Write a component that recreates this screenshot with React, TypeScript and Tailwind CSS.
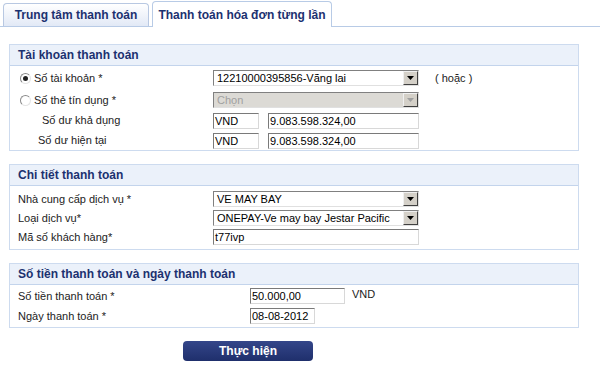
import React from 'react';

const font = { fontFamily: '"Liberation Sans", Arial, sans-serif' };

function Select({ value, disabled }: { value: string; disabled?: boolean }) {
  return (
    <div
      className={[
        'flex h-[16px] w-[206px] items-stretch border border-t-[#808080] border-l-[#808080] border-b-[#e0e0e0] border-r-[#e0e0e0]',
        disabled ? 'bg-[#dcdad5]' : 'bg-white',
      ].join(' ')}
    >
      <span
        className={[
          'flex-1 pl-[3px] text-[11px] leading-[14px]',
          disabled ? 'text-[#a0a0a0]' : 'text-black',
        ].join(' ')}
      >
        {value}
      </span>
      <span className="flex w-[15px] items-center justify-center border border-t-[#f0f0f0] border-l-[#f0f0f0] border-b-[#404040] border-r-[#404040] bg-[#d4d0c8]">
        <svg width="7" height="4" viewBox="0 0 7 4">
          <path d="M0 0h7L3.5 4z" fill={disabled ? '#a0a0a0' : '#000'} />
        </svg>
      </span>
    </div>
  );
}

function Input({ value, w }: { value: string; w: string }) {
  return (
    <div
      className={[
        'h-[16px] border border-t-[#7a7a7a] border-l-[#7a7a7a] border-b-[#d8d8d8] border-r-[#d8d8d8] bg-white pl-[1px] text-[11px] leading-[14px] text-black',
        w,
      ].join(' ')}
    >
      {value}
    </div>
  );
}

function Radio({ checked }: { checked?: boolean }) {
  return (
    <span className="mr-[3px] flex h-[11px] w-[11px] items-center justify-center rounded-full border border-[#8a8a8a] border-r-[#e4e4e4] border-b-[#e4e4e4] bg-white">
      {checked && <span className="h-[5px] w-[5px] rounded-full bg-[#222]" />}
    </span>
  );
}

function Panel({ title, children }: { title: string; children: React.ReactNode }) {
  return (
    <div className="ml-[9px] w-[570px] border border-[#cddbef]">
      <div className="flex h-[21px] items-center border-b border-[#c3d4ec] bg-[#ebf1fa] pl-[8px] text-[12px] font-bold text-[#1c3170]">
        {title}
      </div>
      {children}
    </div>
  );
}

export default function App() {
  return (
    <div className="h-[370px] w-[600px] overflow-hidden bg-white text-[11px] text-[#222]" style={font}>
      <div className="flex h-[27px] items-end border-b border-[#b8cbe6] pl-[3px]">
        <div className="flex h-[23px] w-[146px] items-center justify-center rounded-t-[4px] border border-b-0 border-[#b8c8e2] bg-gradient-to-b from-[#ffffff] to-[#e2e9f6] text-[12px] font-bold text-[#1c3170]">
          Trung tâm thanh toán
        </div>
        <div className="-mb-px ml-[3px] flex h-[26px] w-[180px] items-center justify-center rounded-t-[4px] border border-b-0 border-[#b8cbe6] bg-white text-[12px] font-bold text-[#1c3170]">
          Thanh toán hóa đơn từng lần
        </div>
      </div>

      <div className="mt-[17px]">
        <Panel title="Tài khoản thanh toán">
          <div className="flex flex-col pb-[2px]">
            <div className="mt-[4px] flex h-[16px] items-center">
              <div className="flex w-[203px] items-center pl-[10px]">
                <Radio checked />
                Số tài khoản *
              </div>
              <Select value="12210000395856-Vãng lai" />
              <span className="ml-[16px]">( hoặc )</span>
            </div>
            <div className="mt-[6px] flex h-[16px] items-center">
              <div className="flex w-[203px] items-center pl-[10px]">
                <Radio />
                Số thẻ tín dụng *
              </div>
              <Select value="Chọn" disabled />
            </div>
            <div className="mt-[5px] flex h-[15px] items-center">
              <div className="w-[203px] pl-[32px]">Số dư khả dụng</div>
              <Input value="VND" w="w-[46px]" />
              <div className="ml-[9px]">
                <Input value="9.083.598.324,00" w="w-[151px]" />
              </div>
            </div>
            <div className="mt-[5px] flex h-[15px] items-center">
              <div className="w-[203px] pl-[28px]">Số dư hiện tại</div>
              <Input value="VND" w="w-[46px]" />
              <div className="ml-[9px]">
                <Input value="9.083.598.324,00" w="w-[151px]" />
              </div>
            </div>
          </div>
        </Panel>
      </div>

      <div className="mt-[13px]">
        <Panel title="Chi tiết thanh toán">
          <div className="flex flex-col pb-[4px]">
            <div className="mt-[5px] flex h-[16px] items-center">
              <div className="w-[203px] pl-[8px]">Nhà cung cấp dịch vụ *</div>
              <Select value="VE MAY BAY" />
            </div>
            <div className="mt-[3px] flex h-[16px] items-center">
              <div className="w-[203px] pl-[8px]">Loại dịch vụ*</div>
              <Select value="ONEPAY-Ve may bay Jestar Pacific" />
            </div>
            <div className="mt-[3px] flex h-[16px] items-center">
              <div className="w-[203px] pl-[8px]">Mã số khách hàng*</div>
              <Input value="t77ivp" w="w-[206px]" />
            </div>
          </div>
        </Panel>
      </div>

      <div className="mt-[13px]">
        <Panel title="Số tiền thanh toán và ngày thanh toán">
          <div className="flex flex-col pb-[3px]">
            <div className="mt-[3px] flex h-[16px] items-center">
              <div className="w-[240px] pl-[8px]">Số tiền thanh toán *</div>
              <Input value="50.000,00" w="w-[95px]" />
              <span className="ml-[7px] -mt-[3px]">VND</span>
            </div>
            <div className="mt-[4px] flex h-[16px] items-center">
              <div className="w-[240px] pl-[8px]">Ngày thanh toán *</div>
              <Input value="08-08-2012" w="w-[65px]" />
            </div>
          </div>
        </Panel>
      </div>

      <div className="mt-[13px] pl-[183px]">
        <div className="flex h-[20px] w-[130px] items-center justify-center rounded-[4px] bg-gradient-to-b from-[#34468a] to-[#1f2f6c] text-[12px] font-bold text-white">
          Thực hiện
        </div>
      </div>
    </div>
  );
}
